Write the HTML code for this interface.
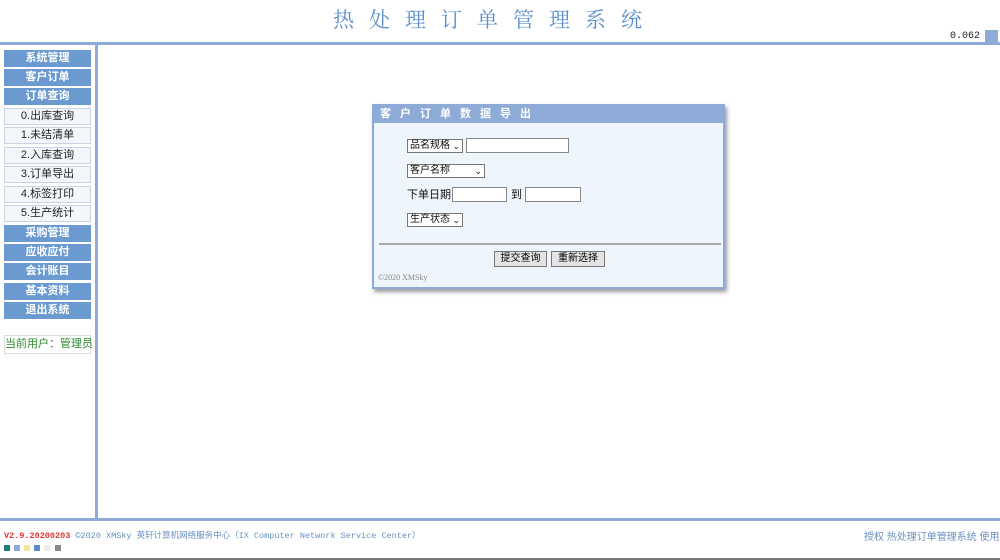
<!DOCTYPE html>
<html><head><meta charset="utf-8"><style>
*{margin:0;padding:0;box-sizing:border-box}
body{width:1000px;height:560px;background:#fff;position:relative;overflow:hidden;font-family:"Liberation Sans","Noto Sans CJK SC",sans-serif;font-size:11px}
.abs{position:absolute}
.title{left:300px;top:4px;width:390px;text-align:center;font-family:"Liberation Serif","Noto Serif CJK SC",serif;font-size:21px;color:#5b8fcc;letter-spacing:15px;white-space:nowrap}
.m{position:absolute;left:4px;width:87px;height:17px;line-height:17px;text-align:center;font-size:11px;font-family:"Liberation Sans","Noto Sans CJK SC",sans-serif;white-space:nowrap}
.b{background:#6a9ad0;color:#fff;font-weight:bold}
.s{background:#f3f7fc;border:1px solid #c8d4e4;color:#222;line-height:15px}
.sel{position:absolute;height:14px;border:1px solid #777;background:#fff;font-size:10px;line-height:12px;padding-left:2px;color:#111;white-space:nowrap}
.sel i{position:absolute;right:2px;top:0;font-style:normal;font-size:9px}
.inp{position:absolute;height:15px;border:1px solid #888;background:#fff}
.btn{position:absolute;height:16px;border:1px solid #777;background:#e4e4e4;font-size:10px;line-height:14px;text-align:center}
</style></head><body>
<div class="abs title">热处理订单管理系统</div>
<div class="abs" style="left:0;top:42px;width:1000px;height:3px;background:#8eaad8"></div>
<div class="abs" style="left:985px;top:30px;width:13px;height:13px;background:#8eaad8"></div>
<div class="abs" style="left:950px;top:31px;font-size:10px;font-family:'Liberation Mono',monospace;color:#222">0.062</div>
<div class="abs" style="left:95px;top:44px;width:3px;height:476px;background:#8eaad8"></div>
<div class="abs" style="left:0;top:518px;width:1000px;height:3px;background:#8eaad8"></div>

<div class="m b" style="top:50px">系统管理</div>
<div class="m b" style="top:69px">客户订单</div>
<div class="m b" style="top:88px">订单查询</div>
<div class="m s" style="top:108px">0.出库查询</div>
<div class="m s" style="top:127px">1.未结清单</div>
<div class="m s" style="top:147px">2.入库查询</div>
<div class="m s" style="top:166px">3.订单导出</div>
<div class="m s" style="top:186px">4.标签打印</div>
<div class="m s" style="top:205px">5.生产统计</div>
<div class="m b" style="top:225px">采购管理</div>
<div class="m b" style="top:244px">应收应付</div>
<div class="m b" style="top:263px">会计账目</div>
<div class="m b" style="top:283px">基本资料</div>
<div class="m b" style="top:302px">退出系统</div>
<div class="m" style="top:335px;height:19px;line-height:17px;border:1px solid #ddd;color:#2e8b2e">当前用户：管理员</div>

<div class="abs" style="left:372px;top:104px;width:353px;height:185px;background:#eef5fc;border:2px solid #8eaad6;box-shadow:2px 3px 4px #999">
 <div style="height:17px;background:#8eaad6;color:#fff;font-weight:bold;font-size:11px;line-height:17px;padding-left:6px;letter-spacing:9px">客户订单数据导出</div>
 <div class="sel" style="left:33px;top:33px;width:56px">品名规格<i>⌄</i></div>
 <div class="inp" style="left:92px;top:32px;width:103px"></div>
 <div class="sel" style="left:33px;top:58px;width:78px">客户名称<i>⌄</i></div>
 <div class="abs" style="left:33px;top:82px;font-size:11px;line-height:15px;color:#111">下单日期</div>
 <div class="inp" style="left:78px;top:81px;width:55px"></div>
 <div class="abs" style="left:137px;top:82px;font-size:11px;line-height:15px;color:#111">到</div>
 <div class="inp" style="left:151px;top:81px;width:56px"></div>
 <div class="sel" style="left:33px;top:107px;width:56px">生产状态<i>⌄</i></div>
 <div class="abs" style="left:5px;top:137px;width:342px;height:2px;background:#aaa"></div>
 <div class="btn" style="left:120px;top:145px;width:53px">提交查询</div>
 <div class="btn" style="left:177px;top:145px;width:54px">重新选择</div>
 <div class="abs" style="left:4px;top:167px;font-size:8px;color:#888;font-family:'Liberation Serif',serif">©2020 XMSky</div>
</div>

<div class="abs" style="left:4px;top:529px;font-size:8.5px;font-family:'Liberation Mono','Noto Sans CJK SC',monospace;white-space:nowrap"><span style="color:#d33;font-weight:bold">V2.9.20200203</span> <span style="color:#6a8fc0">©2020 XMSky 英轩计算机网络服务中心（IX Computer Network Service Center）</span></div>
<div class="abs" style="left:864px;top:528px;font-size:10px;color:#6a8fc0;white-space:nowrap">授权 热处理订单管理系统 使用</div>
<div class="abs" style="left:4px;top:545px;width:6px;height:6px;background:#1a7f7a"></div>
<div class="abs" style="left:14px;top:545px;width:6px;height:6px;background:#8eaad8"></div>
<div class="abs" style="left:24px;top:545px;width:6px;height:6px;background:#f3e7a0"></div>
<div class="abs" style="left:34px;top:545px;width:6px;height:6px;background:#5b8fcc"></div>
<div class="abs" style="left:44px;top:545px;width:6px;height:6px;background:#eee"></div>
<div class="abs" style="left:55px;top:545px;width:6px;height:6px;background:#888"></div>
<div class="abs" style="left:0;top:558px;width:1000px;height:2px;background:#777"></div>
</body></html>
